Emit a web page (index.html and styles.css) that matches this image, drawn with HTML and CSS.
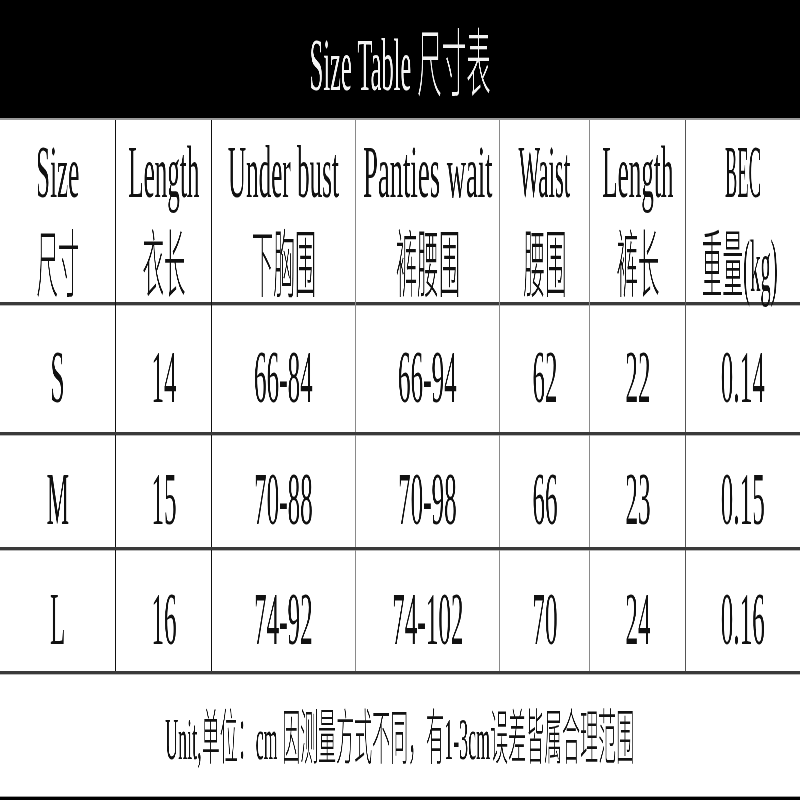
FILE: index.html
```html
<!DOCTYPE html>
<html lang="zh">
<head>
<meta charset="utf-8">
<title>Size Table 尺寸表</title>
<link rel="stylesheet" href="styles.css">
</head>
<body>
<div class="sheet">
  <div class="title"><span class="sq mix">Size Table 尺寸表</span></div>

  <div class="row head">
    <div class="cell c1"><span class="sq lat">Size</span><span class="sq cjk">尺寸</span></div>
    <div class="cell c2"><span class="sq lat">Length</span><span class="sq cjk">衣长</span></div>
    <div class="cell c3"><span class="sq lat">Under bust</span><span class="sq cjk">下胸围</span></div>
    <div class="cell c4"><span class="sq lat wide">Panties wait</span><span class="sq cjk">裤腰围</span></div>
    <div class="cell c5"><span class="sq lat narrow">Waist</span><span class="sq cjk">腰围</span></div>
    <div class="cell c6"><span class="sq lat">Length</span><span class="sq cjk">裤长</span></div>
    <div class="cell c7"><span class="sq lat caps">BEC</span><span class="sq cjk kg">重量(kg)</span></div>
  </div>

  <div class="row data rs">
    <div class="cell c1"><span class="sq lat">S</span></div>
    <div class="cell c2"><span class="sq lat">14</span></div>
    <div class="cell c3"><span class="sq lat">66-84</span></div>
    <div class="cell c4"><span class="sq lat">66-94</span></div>
    <div class="cell c5"><span class="sq lat">62</span></div>
    <div class="cell c6"><span class="sq lat">22</span></div>
    <div class="cell c7"><span class="sq lat">0.14</span></div>
  </div>

  <div class="row data rm">
    <div class="cell c1"><span class="sq lat">M</span></div>
    <div class="cell c2"><span class="sq lat">15</span></div>
    <div class="cell c3"><span class="sq lat">70-88</span></div>
    <div class="cell c4"><span class="sq lat">70-98</span></div>
    <div class="cell c5"><span class="sq lat">66</span></div>
    <div class="cell c6"><span class="sq lat">23</span></div>
    <div class="cell c7"><span class="sq lat">0.15</span></div>
  </div>

  <div class="row data rl">
    <div class="cell c1"><span class="sq lat">L</span></div>
    <div class="cell c2"><span class="sq lat">16</span></div>
    <div class="cell c3"><span class="sq lat">74-92</span></div>
    <div class="cell c4"><span class="sq lat">74-102</span></div>
    <div class="cell c5"><span class="sq lat">70</span></div>
    <div class="cell c6"><span class="sq lat">24</span></div>
    <div class="cell c7"><span class="sq lat">0.16</span></div>
  </div>

  <div class="note"><span class="sq note-text">Unit,单位：cm 因测量方式不同，有1-3cm误差皆属合理范围</span></div>
  <div class="foot"></div>
</div>
</body>
</html>
```

FILE: styles.css
```css
html, body {
  margin: 0;
  padding: 0;
  background: #ffffff;
}

body {
  font-family: "Liberation Serif", "Noto Sans CJK SC", serif;
  color: #111111;
}

.sheet {
  width: 800px;
  height: 800px;
  display: flex;
  flex-direction: column;
  overflow: hidden;
}

.sq {
  display: block;
  white-space: nowrap;
  transform-origin: center center;
  will-change: transform;
  -webkit-font-smoothing: antialiased;
}

.title {
  height: 120px;
  box-sizing: border-box;
  padding-top: 12px;
  background: #000000;
  border-bottom: 2px solid #9a9a9a;
  display: flex;
  align-items: center;
  justify-content: center;
  color: #f4f4f4;
  font-size: 74px;
  line-height: 90px;
}

.mix {
  transform: scaleX(0.33);
  font-weight: 300;
}

.row {
  display: grid;
  grid-template-columns: 116px 96px 144px 144px 90px 96px 114px;
  border-bottom: 3px solid #3a3a3a;
  box-shadow: 0 1px 0 #b8b8b8;
  position: relative;
}

.head { height: 185px; box-sizing: border-box; }
.rs { height: 130px; box-sizing: border-box; }
.rm { height: 115px; box-sizing: border-box; }
.rl { height: 124px; box-sizing: border-box; }

.cell {
  display: flex;
  flex-direction: column;
  align-items: center;
  justify-content: center;
  border-right: 1px solid #111111;
  font-size: 74px;
  line-height: 88px;
  min-width: 0;
}

.head .cell {
  padding-top: 8px;
}

.data .cell {
  padding-top: 16px;
}

.c3, .c4, .c5 { border-right-color: #8a8a8a; }
.c6 { border-right-color: #555555; }
.c7 { border-right: none; }

.lat { transform: scaleX(0.34); }
.lat.wide { transform: scaleX(0.36); }
.lat.narrow { transform: scaleX(0.31); }
.lat.caps { transform: scaleX(0.25); }

.cjk {
  transform: scaleX(0.29);
  margin-top: 6px;
  font-weight: 300;
}

.cjk.kg {
  transform: translateX(-3px) scaleX(0.28);
}

.note {
  flex: 1;
  display: flex;
  align-items: center;
  justify-content: center;
  padding-top: 8px;
  font-size: 60px;
  line-height: 76px;
  border-bottom: 1px solid #a0a0a0;
}

.note-text {
  transform: scaleX(0.3);
  font-weight: 300;
}

.foot {
  height: 3px;
  background: #000000;
}
```
